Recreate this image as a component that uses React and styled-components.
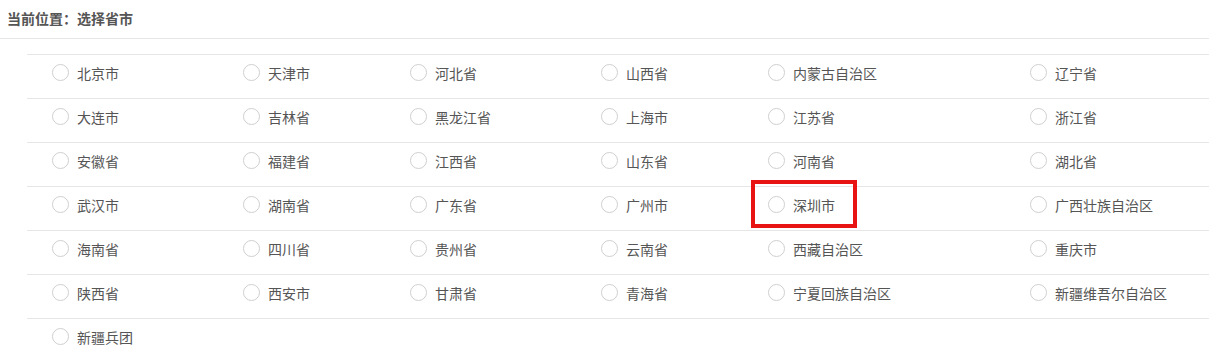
import React from 'react';
import styled, { createGlobalStyle } from 'styled-components';

const GlobalStyle = createGlobalStyle`
  html, body {
    margin: 0;
    padding: 0;
    background: #fff;
    font-family: "Noto Sans CJK SC", "Noto Sans", sans-serif;
  }
`;

const provinces = [
    ['北京市', '天津市', '河北省', '山西省', '内蒙古自治区', '辽宁省'],
    ['大连市', '吉林省', '黑龙江省', '上海市', '江苏省', '浙江省'],
    ['安徽省', '福建省', '江西省', '山东省', '河南省', '湖北省'],
    ['武汉市', '湖南省', '广东省', '广州市', '深圳市', '广西壮族自治区'],
    ['海南省', '四川省', '贵州省', '云南省', '西藏自治区', '重庆市'],
    ['陕西省', '西安市', '甘肃省', '青海省', '宁夏回族自治区', '新疆维吾尔自治区'],
    ['新疆兵团'],
]

const Page = styled.div`
  width: 1209px;
  height: 355px;
  overflow: hidden;
`;

const Crumb = styled.div`
  height: 35px;
  padding: 0 0 3px 7px;
  display: flex;
  align-items: center;
  border-bottom: 1px solid #e6e6e6;
  font-size: 14px;
  font-weight: bold;
  color: #555;
`;

const Table = styled.div`
  margin: 15px 0 0 27px;
`;

const Row = styled.div`
  display: grid;
  grid-template-columns: 191px 167px 191px 167px 262px 1fr;
  height: 43px;
  border-top: 1px solid #e6e6e6;
`;

const Cell = styled.label`
  position: relative;
  display: flex;
  align-items: center;
  padding: 0 0 8px 25px;
  font-size: 14px;
  color: #555;
  cursor: pointer;
`;

const Radio = styled.span`
  width: 15px;
  height: 15px;
  border: 1px solid #cfcfcf;
  border-radius: 50%;
  margin-right: 8px;
  flex-shrink: 0;
`;

// red annotation box drawn over the selected city
const Highlight = styled.span`
  position: absolute;
  left: 8px;
  top: -7px;
  width: 98px;
  height: 40px;
  border: 4px solid #e81414;
  pointer-events: none;
`;

const App = () => {
    return <Page>
        <GlobalStyle />
        <Crumb>当前位置：选择省市</Crumb>
        <Table>
            {provinces.map((row, i) =>
                <Row key={i}>
                    {row.map(name =>
                        <Cell key={name}>
                            <Radio />
                            {name}
                            {name === '深圳市' && <Highlight />}
                        </Cell>
                    )}
                </Row>
            )}
        </Table>
    </Page>
}

export default App;
